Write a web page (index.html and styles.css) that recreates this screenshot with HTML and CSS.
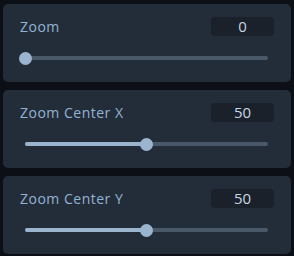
FILE: index.html
```html
<!DOCTYPE html>
<html>
<head>
<meta charset="utf-8">
<link rel="stylesheet" href="styles.css">
</head>
<body>
<div class="panel">
  <div class="card">
    <div class="head"><span class="label">Zoom</span><span class="value">0</span></div>
    <div class="slider"><div class="track"><div class="fill" style="width:0%"></div><div class="thumb" style="left:0%"></div></div></div>
  </div>
  <div class="card">
    <div class="head"><span class="label">Zoom Center X</span><span class="value">50</span></div>
    <div class="slider"><div class="track"><div class="fill" style="width:50%"></div><div class="thumb" style="left:50%"></div></div></div>
  </div>
  <div class="card">
    <div class="head"><span class="label">Zoom Center Y</span><span class="value">50</span></div>
    <div class="slider"><div class="track"><div class="fill" style="width:50%"></div><div class="thumb" style="left:50%"></div></div></div>
  </div>
</div>
</body>
</html>
```
FILE: styles.css
```css
html, body {
  margin: 0;
  padding: 0;
  background: #0c1016;
}
body {
  width: 294px;
  height: 256px;
  font-family: "Open Sans", sans-serif;
}
.panel {
  display: flex;
  flex-direction: column;
  gap: 8px;
  padding: 4px 3px;
}
.card {
  height: 78px;
  box-sizing: border-box;
  background: #232d3a;
  border-radius: 5px;
  padding: 13px 17px 0 17px;
}
.head {
  display: flex;
  justify-content: space-between;
  align-items: center;
  height: 19px;
}
.label {
  color: #93b3d3;
  font-size: 14px;
  letter-spacing: 0.5px;
}
.value {
  width: 63px;
  height: 19px;
  box-sizing: border-box;
  background: #1a212b;
  border-radius: 4px;
  color: #c6d5e4;
  font-size: 15px;
  line-height: 19px;
  text-align: center;
}
.slider {
  padding: 0 6px 0 5px;
  margin-top: 20px;
}
.track {
  position: relative;
  height: 4px;
  border-radius: 2px;
  background: #4a5969;
}
.fill {
  height: 4px;
  border-radius: 2px;
  background: #9bb5ce;
}
.thumb {
  position: absolute;
  top: 50%;
  width: 13px;
  height: 13px;
  margin: -6.5px 0 0 -6.5px;
  border-radius: 50%;
  background: #9bb5ce;
}
```
